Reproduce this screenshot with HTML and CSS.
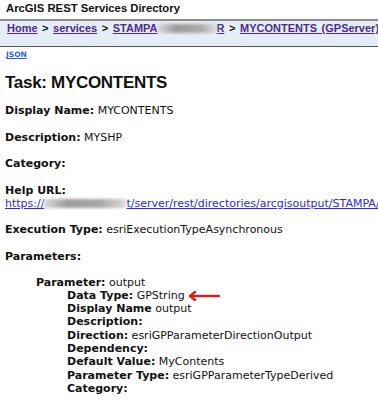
FILE: index.html
```html
<!DOCTYPE html>
<html lang="en">
<head>
  <meta charset="UTF-8" />
  <title>ArcGIS REST Services Directory</title>
  <link rel="stylesheet" href="styles.css">
</head>
<body>
  <div class="site-title">ArcGIS REST Services Directory</div>

  <nav class="navbar">
    <a href="#">Home</a> &gt; <a href="#">services</a> &gt; <a href="#">STAMPA<span class="smudge nav-smudge"></span>R</a> &gt; <a href="#">MYCONTENTS (GPServer)</a>
  </nav>

  <div class="content">
    <a href="#" class="json">JSON</a>

    <h2>Task: MYCONTENTS</h2>

    <p><b>Display Name:</b> MYCONTENTS</p>
    <p><b>Description:</b> MYSHP</p>
    <p><b>Category:</b> </p>
    <p><b>Help URL:</b><br>
      <a href="#" class="help-link">https://<span class="smudge url-smudge"></span>t/server/rest/directories/arcgisoutput/STAMPA/MYCONTENTS.htm</a>
    </p>
    <p><b>Execution Type:</b> esriExecutionTypeAsynchronous</p>

    <p class="params-label"><b>Parameters:</b></p>

    <ul class="params">
      <li><b>Parameter:</b> output
        <ul>
          <li><b>Data Type:</b> GPString<svg class="arrow" width="32" height="10" viewBox="0 0 32 10">
              <line x1="3" y1="5" x2="32" y2="5" stroke="#e3191c" stroke-width="2.4"/>
              <path d="M7 1 L2 5 L7 9" fill="none" stroke="#e3191c" stroke-width="2.4" stroke-linecap="round" stroke-linejoin="round"/>
            </svg></li>
          <li><b>Display Name</b> output</li>
          <li><b>Description:</b> </li>
          <li><b>Direction:</b> esriGPParameterDirectionOutput</li>
          <li><b>Dependency:</b> </li>
          <li><b>Default Value:</b> MyContents</li>
          <li><b>Parameter Type:</b> esriGPParameterTypeDerived</li>
          <li><b>Category:</b> </li>
        </ul>
      </li>
    </ul>
  </div>
</body>
</html>
```

FILE: styles.css
```css
* { margin: 0; padding: 0; box-sizing: border-box; }

body {
  font-family: 'DejaVu Sans', Verdana, sans-serif;
  font-size: 11px;
  color: #111;
  background: #fff;
  overflow: hidden;
}

.site-title {
  font-family: 'Liberation Sans', Arial, sans-serif;
  font-weight: bold;
  font-size: 11.3px;
  line-height: 13px;
  padding: 2px 6px 0;
  height: 19px;
  white-space: nowrap;
}

.navbar {
  font-family: 'Liberation Sans', Arial, sans-serif;
  border-top: 2px solid #8c8c8c;
  border-bottom: 1px solid #555;
  background: #e5eef7;
  padding: 1px 7px 11px;
  height: 28px;
  font-weight: bold;
  font-size: 11px;
  word-spacing: 1.5px;
  line-height: 13px;
  white-space: nowrap;
  overflow: hidden;
}

.navbar a {
  color: #4e2a8e;
}

.smudge {
  display: inline-block;
  height: 9px;
  vertical-align: -1px;
  background: linear-gradient(90deg, #d8d8d8, #9c9c9c 30%, #a8a8a8 70%, #dcdcdc);
  filter: blur(1.5px);
}

.nav-smudge { width: 59px; }
.url-smudge { width: 82px; }

.content {
  padding: 0 5px;
  white-space: nowrap;
}

.json {
  display: block;
  margin: 3px 0 0 1px;
  font-size: 7.5px;
  line-height: 9px;
  font-weight: bold;
  color: #2f62d6;
}

h2 {
  font-family: 'Liberation Sans', Arial, sans-serif;
  font-size: 17px;
  font-weight: bold;
  letter-spacing: -0.3px;
  line-height: 20px;
  margin: 14px 0 11px;
}

p {
  line-height: 13px;
  margin-bottom: 13.5px;
}

.help-link {
  color: #2a2ae0;
}

.params-label {
  margin-bottom: 13px;
}

.params {
  list-style: none;
  padding-left: 31px;
  line-height: 13.3px;
}

.params ul {
  list-style: none;
  padding-left: 31px;
}

.arrow {
  vertical-align: middle;
  margin-left: 3px;
}
```
